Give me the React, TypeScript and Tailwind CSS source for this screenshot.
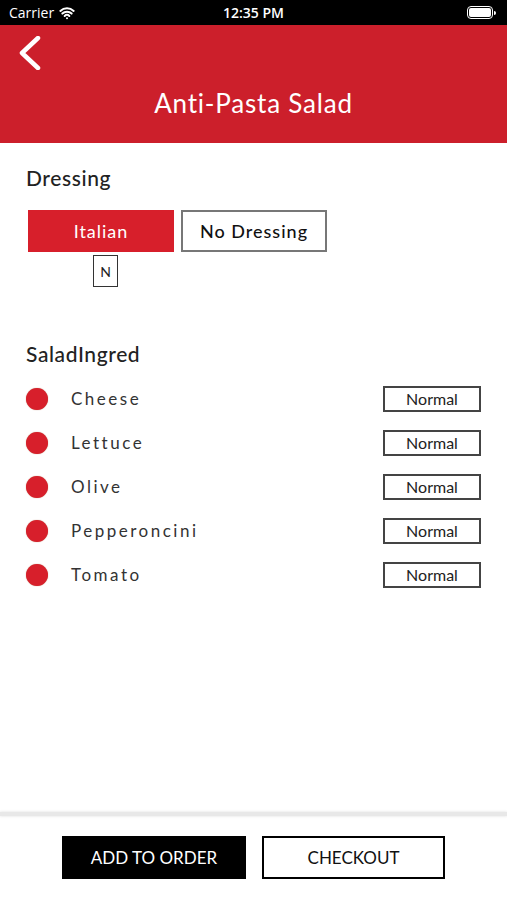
import { Wifi } from "lucide-react";

const ingredients = ["Cheese", "Lettuce", "Olive", "Pepperoncini", "Tomato"];

export default function App() {
  return (
    <div
      className="flex h-[900px] w-[507px] flex-col bg-white text-[#222]"
      style={{ fontFamily: "Lato, 'Open Sans', sans-serif" }}
    >
      {/* Status bar */}
      <div
        className="flex h-[25px] items-center justify-between bg-black px-[9px] text-[14px] text-white"
        style={{ fontFamily: "'Open Sans', Roboto, sans-serif" }}
      >
        <div className="flex w-[120px] items-center gap-[5px]">
          <span>Carrier</span>
          <Wifi className="h-[16px] w-[16px]" strokeWidth={3} />
        </div>
        <span className="font-semibold">12:35 PM</span>
        <div className="flex w-[120px] justify-end pr-[2px]">
          <div className="flex items-center">
            <div className="flex h-[13px] w-[26px] items-center rounded-[4px] border border-white p-[1px]">
              <div className="h-full w-full rounded-[2px] bg-white" />
            </div>
            <div className="ml-[1px] h-[4px] w-[2px] rounded-r bg-white" />
          </div>
        </div>
      </div>

      {/* Header */}
      <div className="flex h-[118px] flex-col bg-[#cc1f2b] text-white">
        <div className="pl-[18px] pt-[11px]">
          <svg width="24" height="34" viewBox="0 0 24 34" fill="none">
            <polyline
              points="20,2 4,17 20,32"
              stroke="white"
              strokeWidth="4.5"
              strokeLinecap="round"
              strokeLinejoin="round"
            />
          </svg>
        </div>
        <h1 className="mt-[15px] text-center text-[26px] leading-[36px] tracking-[0.8px]">Anti-Pasta Salad</h1>
      </div>

      {/* Content */}
      <div className="flex-1 px-[26px]">
        <h2 className="mt-[19px] text-[21px] leading-[32px] font-medium tracking-[0.6px]">Dressing</h2>
        <div className="mt-[16px] flex gap-[7px] pl-[2px]">
          <div className="flex flex-col items-center">
            <button className="h-[42px] w-[146px] bg-[#d71f2b] text-[18px] tracking-[1px] text-white">
              Italian
            </button>
            <div className="ml-[9px] mt-[3px] flex h-[32px] w-[25px] items-center justify-center border border-[#333] text-[14px]">
              N
            </div>
          </div>
          <button className="h-[42px] w-[146px] border-2 border-[#777] text-[18px] font-medium tracking-[1px] text-[#111]">
            No Dressing
          </button>
        </div>

        <h2 className="mt-[51px] text-[21px] leading-[32px] font-medium tracking-[0.6px]">SaladIngred</h2>
        <div className="mt-[7px] flex flex-col">
          {ingredients.map((name) => (
            <div key={name} className="flex h-[44px] items-center">
              <div className="h-[22px] w-[22px] rounded-full bg-[#d71f2b] shadow-[0_0_1px_#b87d60]" />
              <span className="ml-[23px] flex-1 text-[17px] tracking-[2.5px] text-[#333]">{name}</span>
              <div className="flex h-[26px] w-[98px] items-center justify-center border-2 border-[#444] text-[16px]">
                Normal
              </div>
            </div>
          ))}
        </div>
      </div>

      {/* Footer */}
      <div className="h-[4px] bg-[#e8e8e8] shadow-[0_0_3px_#ddd]" />
      <div className="flex h-[84px] items-start justify-center gap-[16px] pt-[20px]">
        <button className="h-[43px] w-[184px] bg-black text-[17px] text-white">ADD TO ORDER</button>
        <button className="h-[43px] w-[183px] border-2 border-black text-[17px] text-[#111]">CHECKOUT</button>
      </div>
    </div>
  );
}
